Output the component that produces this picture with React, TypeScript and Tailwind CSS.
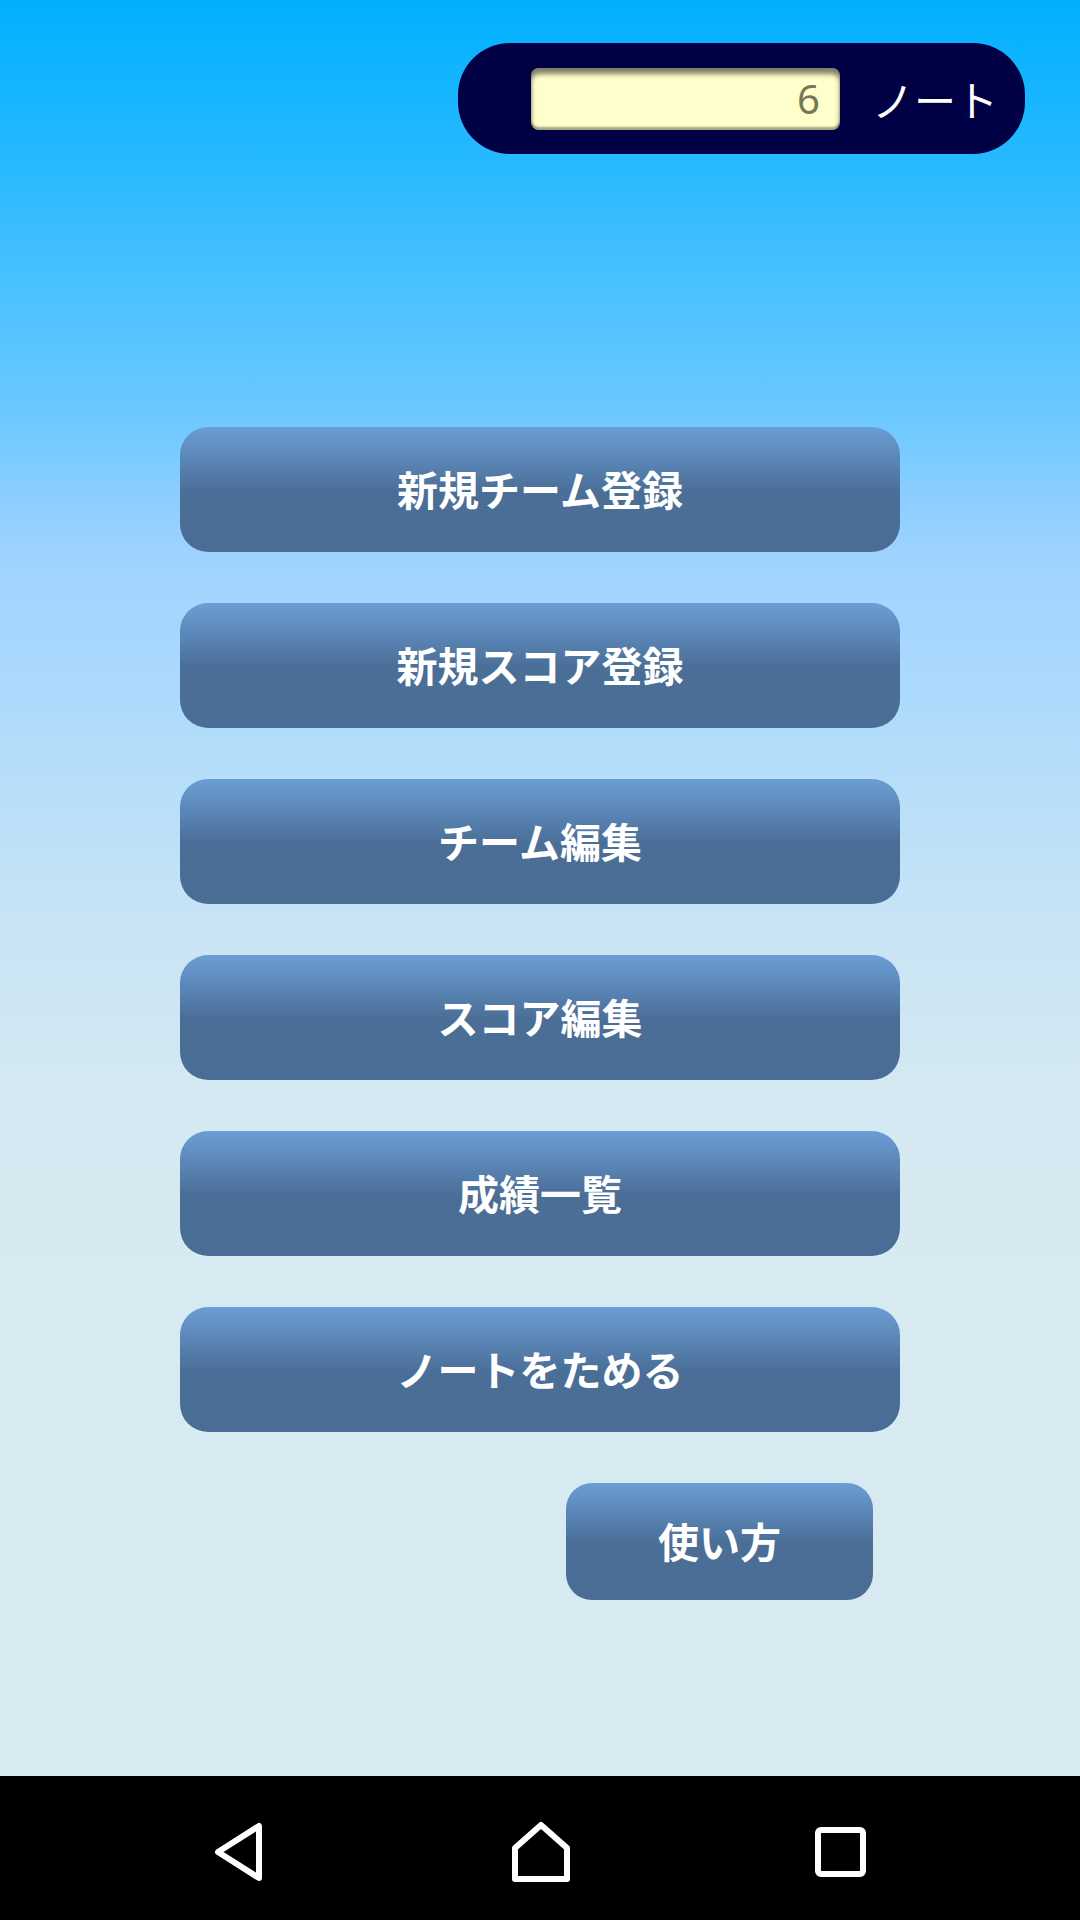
const menu = [
  "新規チーム登録",
  "新規スコア登録",
  "チーム編集",
  "スコア編集",
  "成績一覧",
  "ノートをためる",
];

const jp = "font-['Noto_Sans_CJK_JP','Noto_Sans',sans-serif]";

const buttonBg =
  "bg-[linear-gradient(to_bottom,#6a9ed4_0%,#5b87b8_25%,#4a6e96_52%,#4a6d95_100%)]";

function MenuButton({ label }: { label: string }) {
  return (
    <button
      type="button"
      className={`w-[720px] h-[125px] rounded-[28px] ${buttonBg} text-white text-[41px] font-bold ${jp} flex items-center justify-center pb-[2px]`}
    >
      {label}
    </button>
  );
}

function NavBar() {
  return (
    <div className="h-[144px] bg-black flex items-center">
      <div className="w-full flex items-center justify-between px-[214px] pt-[8px]">
        <svg width="52" height="60" viewBox="0 0 52 60" className="-ml-[1px]">
          <path
            d="M46 4 L46 56 L5 30 Z"
            fill="none"
            stroke="white"
            strokeWidth="6"
            strokeLinejoin="round"
          />
        </svg>
        <svg width="62" height="62" viewBox="0 0 62 62" className="ml-[2px]">
          <path
            d="M31 4 L57 27 L57 58 L5 58 L5 27 Z"
            fill="none"
            stroke="white"
            strokeWidth="6"
            strokeLinejoin="round"
          />
        </svg>
        <svg width="54" height="52" viewBox="0 0 54 52" className="mr-[-2px]">
          <rect
            x="4"
            y="4"
            width="45"
            height="44"
            rx="3"
            fill="none"
            stroke="white"
            strokeWidth="6"
          />
        </svg>
      </div>
    </div>
  );
}

export default function App() {
  return (
    <div className="w-[1080px] h-[1920px] flex flex-col overflow-hidden">
      <div className="h-[1776px] bg-[linear-gradient(to_bottom,#00b0ff_0%,#22b8ff_8%,#4ec2ff_17%,#6ac8ff_23%,#9ed2ff_31%,#acdafc_39%,#c8e4f5_52%,#d5e9f2_62%,#d8eaf1_75%,#d8eaf1_100%)] flex flex-col">
        <div className="flex justify-end pt-[43px] pr-[55px]">
          <div className="w-[567px] h-[111px] rounded-[52px] bg-[#000044] flex items-center pl-[73px]">
            <div className="w-[309px] h-[62px] rounded-[8px] bg-[#ffffcc] shadow-[inset_0_6px_5px_rgba(0,0,0,0.5),inset_0_-3px_2px_rgba(0,0,0,0.35)] flex items-center justify-end pr-[20px]">
              <span className="text-[40px] text-[#777755] font-['Noto_Sans',sans-serif] leading-none">
                6
              </span>
            </div>
            <span className={`ml-[32px] text-white text-[42px] ${jp} leading-none`}>
              ノート
            </span>
          </div>
        </div>

        <div className="mt-[273px] flex flex-col items-center gap-[51px]">
          {menu.map((label) => (
            <MenuButton key={label} label={label} />
          ))}
        </div>

        <div className="mt-[51px] pl-[566px]">
          <button
            type="button"
            className={`w-[307px] h-[117px] rounded-[26px] ${buttonBg} text-white text-[41px] font-bold ${jp} flex items-center justify-center pb-[2px]`}
          >
            使い方
          </button>
        </div>
      </div>
      <NavBar />
    </div>
  );
}
